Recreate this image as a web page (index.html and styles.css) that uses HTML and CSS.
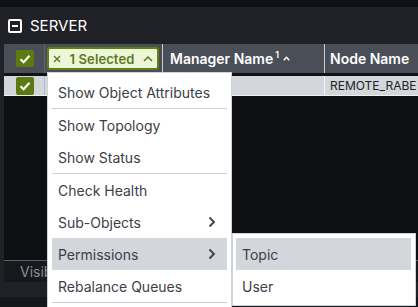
FILE: index.html
```html
<!DOCTYPE html>
<html>
<head>
  <meta charset="utf-8" />
  <title>Server</title>
  <link rel="stylesheet" href="styles.css">
</head>
<body>
  <div class="topbar"></div>
  <div class="panel-title">
    <svg class="collapse-icon" width="14" height="14" viewBox="0 0 14 14">
      <rect x="1" y="1" width="12" height="12" rx="1" fill="none" stroke="#fff" stroke-width="2" />
      <line x1="4" y1="7" x2="10" y2="7" stroke="#fff" stroke-width="2" />
    </svg>
    <span>SERVER</span>
  </div>

  <div class="grid">
    <div class="grid-header">
      <div class="cell cell-check">
        <span class="checkbox">
          <svg width="12" height="10" viewBox="0 0 12 10"><path d="M1.5 5.2 L4.6 8.2 L10.5 1.8" fill="none" stroke="#fff" stroke-width="2.2" /></svg>
        </span>
      </div>
      <div class="cell cell-chip">
        <span class="chip">
          <svg width="8" height="8" viewBox="0 0 8 8"><path d="M1 1 L7 7 M7 1 L1 7" stroke="#5b7a1f" stroke-width="1.4" /></svg>
          <span class="chip-label">1 Selected</span>
          <svg width="10" height="6" viewBox="0 0 10 6"><path d="M1 5 L5 1 L9 5" fill="none" stroke="#5b7a1f" stroke-width="1.5" /></svg>
        </span>
      </div>
      <div class="cell cell-manager">
        Manager Name<sup>1</sup>
        <svg class="sort-icon" width="7" height="5" viewBox="0 0 7 5"><path d="M0.8 4.2 L3.5 1.3 L6.2 4.2" fill="none" stroke="#fff" stroke-width="1.5" /></svg>
      </div>
      <div class="cell cell-node">Node Name</div>
    </div>

    <div class="grid-row">
      <div class="cell cell-check">
        <span class="checkbox">
          <svg width="12" height="10" viewBox="0 0 12 10"><path d="M1.5 5.2 L4.6 8.2 L10.5 1.8" fill="none" stroke="#fff" stroke-width="2.2" /></svg>
        </span>
      </div>
      <div class="cell cell-chip"></div>
      <div class="cell cell-manager"></div>
      <div class="cell cell-node">REMOTE_RABE</div>
    </div>

    <div class="grid-body"></div>
    <div class="grid-footer">Visib</div>
  </div>
  <div class="bottom-strip"></div>

  <div class="menu">
    <div class="menu-item">Show Object Attributes</div>
    <div class="menu-sep"></div>
    <div class="menu-item">Show Topology</div>
    <div class="menu-item">Show Status</div>
    <div class="menu-sep"></div>
    <div class="menu-item">Check Health</div>
    <div class="menu-item">Sub-Objects
      <svg width="8" height="12" viewBox="0 0 8 12"><path d="M1.5 1.5 L6 6 L1.5 10.5" fill="none" stroke="#3a3f48" stroke-width="1.8" /></svg>
    </div>
    <div class="menu-item active">Permissions
      <svg width="8" height="12" viewBox="0 0 8 12"><path d="M1.5 1.5 L6 6 L1.5 10.5" fill="none" stroke="#3a3f48" stroke-width="1.8" /></svg>
    </div>
    <div class="menu-item">Rebalance Queues</div>
    <div class="menu-sep"></div>
  </div>

  <div class="menu submenu">
    <div class="menu-item active">Topic</div>
    <div class="menu-item">User</div>
  </div>
</body>
</html>
```

FILE: styles.css
```css
body {
  margin: 0;
  width: 418px;
  height: 307px;
  overflow: hidden;
  position: relative;
  background: #202127;
  font-family: Inter, "Noto Sans", sans-serif;
}
.topbar {
  height: 7px;
  background: #111217;
}
.panel-title {
  height: 37px;
  display: flex;
  align-items: center;
  gap: 8px;
  padding-left: 8px;
  color: #fff;
  font-size: 15px;
}
.collapse-icon {
  display: block;
}
.grid {
  margin-left: 4px;
}
.grid-header {
  display: flex;
  height: 29px;
  background: #4a4e57;
  color: #fff;
  font-size: 14px;
  font-weight: 600;
  border-bottom: 3px solid #111217;
}
.grid-row {
  display: flex;
  height: 19px;
  background: #d3d6da;
  border-bottom: 1px solid #eef0f2;
  color: #1d2026;
  font-size: 12px;
}
.cell {
  display: flex;
  align-items: center;
  flex-shrink: 0;
  overflow: hidden;
  white-space: nowrap;
}
.cell-check {
  width: 41px;
  justify-content: center;
  padding-left: 1px;
  border-right: 1px solid #5e636c;
  box-sizing: border-box;
}
.grid-row .cell-check {
  border-right-color: #b9bcc1;
}
.cell-chip {
  width: 118px;
  padding-left: 2px;
  border-right: 1px solid #c9ccd1;
  box-sizing: border-box;
}
.cell-manager {
  width: 162px;
  padding-left: 7px;
  border-right: 1px solid #c9ccd1;
  box-sizing: border-box;
}
.grid-row .cell-manager {
  border-right-color: #f2f3f5;
}
.cell-node {
  flex: 1;
  padding-left: 5px;
}
.cell-manager sup {
  font-size: 9px;
  margin-left: 2px;
  align-self: flex-start;
  margin-top: 5px;
}
.sort-icon {
  margin-left: 4px;
}
.checkbox {
  width: 18px;
  height: 17px;
  border-radius: 2px;
  background: #5b7b12;
  display: flex;
  align-items: center;
  justify-content: center;
}
.grid-row .checkbox {
  height: 18px;
}
.chip {
  width: 112px;
  height: 23px;
  box-sizing: border-box;
  border: 2px solid #5f8016;
  border-radius: 3px;
  background: #edf6d6;
  display: flex;
  align-items: center;
  padding: 0 4px 0 4px;
  color: #5b7a1f;
  font-size: 13px;
  font-weight: 600;
}
.chip-label {
  flex: 1;
  text-align: center;
  letter-spacing: 0.1px;
}
.grid-body {
  height: 164px;
  background: #0e0f12;
}
.grid-footer {
  height: 21px;
  border-top: 1px solid #5a5e66;
  background: #17181c;
  color: #8a8e97;
  font-size: 14px;
  padding-left: 16px;
  display: flex;
  align-items: center;
}
.bottom-strip {
  margin-top: 15px;
  height: 10px;
  background: #16171b;
}

/* context menu */
.menu {
  position: absolute;
  left: 47px;
  top: 72px;
  width: 185px;
  box-sizing: border-box;
  background: #fff;
  border: 1px solid #cfd2d6;
  padding: 3px 4px 20px;
  color: #3a3f48;
  font-size: 14px;
}
.menu-item {
  height: 32px;
  display: flex;
  align-items: center;
  justify-content: space-between;
  padding: 0 11px 0 6px;
}
.menu-item.active {
  background: #d3d6da;
}
.menu-sep {
  height: 1px;
  background: #cdd0d4;
}
.submenu {
  left: 232px;
  top: 233px;
  width: 184px;
  padding: 4px 4px 3px 3px;
}
```
